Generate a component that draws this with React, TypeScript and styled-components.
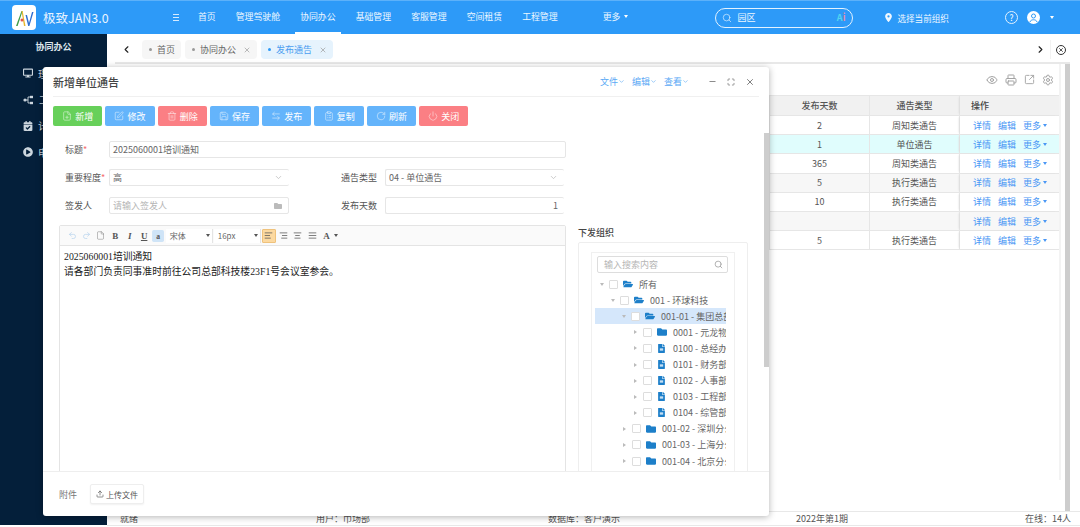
import React from "react";
import styled, { createGlobalStyle } from "styled-components";
import {
  AlignCenter,
  AlignJustify,
  AlignLeft,
  AlignRight,
  ArrowLeftRight,
  ChevronDown,
  ChevronLeft,
  ChevronRight,
  ClipboardList,
  Eye,
  File,
  FilePlus,
  Maximize,
  Minus,
  Power,
  Printer,
  Redo2,
  RotateCw,
  Save,
  Search,
  Settings,
  SquareArrowOutUpRight,
  SquarePen,
  Trash2,
  Undo2,
  Upload,
  X,
} from "lucide-react";
import { FaCalendarCheck, FaDesktop, FaFileAlt, FaFolder, FaFolderOpen, FaPlayCircle } from "react-icons/fa";
import { FaLocationDot } from "react-icons/fa6";

const GlobalStyle = createGlobalStyle`
  html, body {
    margin: 0;
    padding: 0;
    background: #fff;
  }
  * {
    box-sizing: border-box;
  }
  body {
    font-family: "Noto Sans CJK SC", "Noto Sans", sans-serif;
    font-size: 9px;
    color: #555;
  }
`;

const Page = styled.div`
  position: relative;
  width: 1080px;
  height: 527px;
  overflow: hidden;
  display: flex;
  flex-direction: column;
`;

const Header = styled.header`
  height: 34px;
  flex: none;
  display: flex;
  align-items: center;
  background: #2d9af8;
  border-top: 1px solid #5cb1fa;
  color: #fff;
`;

const Brand = styled.div`
  width: 170px;
  height: 100%;
  padding-left: 12px;
  display: flex;
  align-items: center;
  gap: 7px;
  font-size: 12.5px;
  color: #e8f4ff;
`;

const LogoTile = styled.div`
  width: 24px;
  height: 25px;
  border-radius: 4px;
  background: #fff;
  display: flex;
  align-items: center;
  justify-content: center;
`;

const NavToggle = styled.div`
  width: 9px;
  margin-right: 9px;
  display: flex;
  flex-direction: column;
  gap: 2px;
  align-items: flex-end;
  span {
    display: block;
    width: 6px;
    height: 1px;
    background: #d6ebff;
  }
`;

const NavItem = styled.div<{ $active?: boolean }>`
  height: 100%;
  margin: 0 5px;
  padding: 0 5px;
  display: flex;
  align-items: center;
  gap: 4px;
  font-size: 8.9px;
  white-space: nowrap;
  border-bottom: 2px solid ${(p) => (p.$active ? "#fff" : "transparent")};
  color: #eef7ff;
`;

const MoreNav = styled(NavItem)`
  margin-left: 30px;
`;

const Caret = styled.span<{ $color?: string }>`
  display: inline-block;
  width: 0;
  height: 0;
  border-left: 2.5px solid transparent;
  border-right: 2.5px solid transparent;
  border-top: 3px solid ${(p) => p.$color || "#fff"};
`;

const SearchBox = styled.div`
  width: 138px;
  height: 20px;
  margin-left: 77px;
  padding: 0 7px 0 6px;
  display: flex;
  align-items: center;
  gap: 5px;
  border: 1px solid #e3f2ff;
  border-radius: 10px;
  font-size: 9px;
  color: #eef7ff;
`;

const SearchText = styled.span`
  flex: 1;
`;

const AiMark = styled.span`
  font-size: 9px;
  font-weight: 700;
  color: #52d4f0;
  i {
    font-style: normal;
    color: #e58aa8;
  }
`;

const OrgPicker = styled.div`
  margin-left: 31px;
  display: flex;
  align-items: center;
  gap: 4px;
  font-size: 8.6px;
  color: #eef7ff;
`;

const HelpIcon = styled.div`
  width: 13px;
  height: 13px;
  margin-left: 56px;
  border: 1px solid #e3f2ff;
  border-radius: 50%;
  font-size: 8.5px;
  line-height: 11px;
  text-align: center;
`;

const Avatar = styled.div`
  width: 13px;
  height: 13px;
  margin-left: 9px;
  margin-right: 10px;
  display: flex;
`;

const Body = styled.div`
  flex: 1;
  min-height: 0;
  display: flex;
`;

const Sidebar = styled.aside`
  width: 107px;
  flex: none;
  height: 491px;
  background: #041f3a;
  color: #ccd6de;
`;

const SidebarTitle = styled.div`
  height: 25px;
  display: flex;
  align-items: center;
  justify-content: center;
  font-weight: 700;
  color: #dfe6ec;
`;

const SideMenu = styled.div`
  padding-top: 1px;
`;

const SideItem = styled.div`
  height: 26.4px;
  padding-left: 23px;
  display: flex;
  align-items: center;
  gap: 5px;
  white-space: nowrap;
  font-size: 10px;
`;

const Main = styled.main`
  flex: 1;
  min-width: 0;
  display: flex;
  flex-direction: column;
`;

const TabBar = styled.div`
  height: 28px;
  flex: none;
  padding: 6px 0 3px 14px;
  display: flex;
  align-items: stretch;
  gap: 4px;
`;

const TabArrow = styled.div`
  width: 16px;
  margin-right: 1px;
  display: flex;
  align-items: center;
  color: #222;
`;

const Tab = styled.div<{ $active?: boolean }>`
  padding: 0 6px 0 7px;
  display: flex;
  align-items: center;
  gap: 5px;
  border-radius: 4px;
  white-space: nowrap;
  background: ${(p) => (p.$active ? "#e6f3fd" : "#f6f6f6")};
  color: ${(p) => (p.$active ? "#4a9df0" : "#666")};
`;

const TabDot = styled.span<{ $active?: boolean }>`
  width: 3px;
  height: 3px;
  border-radius: 50%;
  background: ${(p) => (p.$active ? "#2d9af8" : "#999")};
`;

const TabClose = styled(X)`
  margin-left: 2px;
  color: #999;
`;

const TabTools = styled.div`
  margin-left: auto;
  display: flex;
  align-items: center;
  color: #222;
`;

const TabNext = styled.div`
  width: 15px;
  display: flex;
  align-items: center;
  justify-content: flex-start;
`;

const TabShut = styled.div`
  width: 30px;
  height: 100%;
  display: flex;
  align-items: center;
  padding-left: 5px;
  border-left: 1px solid #f2f2f2;
`;

const ShutIcon = styled.div`
  width: 10px;
  height: 10px;
  border: 1px solid #333;
  border-radius: 50%;
  display: flex;
  align-items: center;
  justify-content: center;
`;

const Workspace = styled.div`
  flex: 1;
  min-height: 0;
  margin-left: 8px;
  margin-right: 10px;
  display: flex;
  border-top: 2px solid #e8e8e8;
`;

const TablePanel = styled.section`
  flex: 1;
  min-width: 0;
  padding-right: 4px;
`;

const PanelInner = styled.div`
  height: 416px;
  border-right: 2px solid #f3f3f3;
`;

const TableTools = styled.div`
  height: 31px;
  padding-right: 5px;
  display: flex;
  align-items: center;
  justify-content: flex-end;
  gap: 7px;
  color: #a3a3a3;
`;

const TableRow = styled.div<{ $bg?: string }>`
  height: 19.2px;
  display: grid;
  grid-template-columns: 1fr 100px 90px 99px;
  border-bottom: 1px solid #e6e6e6;
  background: ${(p) => p.$bg || "#fff"};
`;

const HeadRow = styled(TableRow)`
  height: 21px;
  background: #f1f1f1;
  border-top: 1px solid #e6e6e6;
  font-weight: 500;
  color: #444;
`;

const Cell = styled.div`
  display: flex;
  align-items: center;
  justify-content: center;
  border-right: 1px solid #e6e6e6;
  color: #555;
`;

const OpCell = styled.div`
  padding-left: 13px;
  display: flex;
  align-items: center;
  gap: 7px;
  box-shadow: -2px 0 2px -1px #ddd;
`;

const OpHead = styled(OpCell)`
  padding-left: 11px;
  color: #444;
`;

const OpLink = styled.span`
  display: inline-flex;
  align-items: center;
  gap: 2px;
  color: #4a97f5;
`;

const ScrollTrack = styled.div`
  width: 5px;
  flex: none;
  background: #cdcdcd;
`;

const StatusBar = styled.footer`
  height: 15px;
  flex: none;
  margin-bottom: 1px;
  padding-left: 13px;
  display: grid;
  grid-template-columns: 196px 232px 248px 229px auto;
  align-items: center;
  border-top: 1px solid #e8e8e8;
  border-bottom: 1px solid #e8e8e8;
  color: #555;
  white-space: nowrap;
`;

const Modal = styled.div`
  position: absolute;
  left: 43px;
  top: 67px;
  width: 726px;
  height: 449px;
  display: flex;
  flex-direction: column;
  background: #fff;
  border-radius: 3px;
  box-shadow: 0 1px 7px rgba(0, 0, 0, 0.3);
`;

const ModalHeader = styled.div`
  height: 30px;
  flex: none;
  margin: 0 10px;
  display: flex;
  align-items: center;
  border-bottom: 1px solid #f0f0f0;
`;

const ModalTitle = styled.h2`
  margin: 0;
  font-size: 11px;
  font-weight: 500;
  color: #444;
`;

const MenuGroup = styled.div`
  margin-left: auto;
  display: flex;
  gap: 7px;
`;

const MenuLink = styled.span`
  display: inline-flex;
  align-items: center;
  color: #5aa9f5;
`;

const WindowTools = styled.div`
  width: 70px;
  padding-left: 19px;
  display: flex;
  align-items: center;
  gap: 10px;
  color: #666;
`;

const ModalBody = styled.div`
  flex: 1;
  min-height: 0;
  display: flex;
`;

const ModalContent = styled.div`
  flex: 1;
  min-width: 0;
  overflow: hidden;
`;

const ModalScroll = styled.div`
  width: 5px;
  flex: none;
  padding-top: 36px;
  &::before {
    content: "";
    display: block;
    height: 234px;
    background: #cdcdcd;
  }
`;

const ButtonRow = styled.div`
  margin: 9px 0 15px 10px;
  display: flex;
  gap: 3px;
`;

const ActionButton = styled.button<{ $bg: string }>`
  width: 49.3px;
  height: 20px;
  padding: 0;
  display: flex;
  align-items: center;
  justify-content: center;
  gap: 3px;
  border: 0;
  border-radius: 2px;
  background: ${(p) => p.$bg};
  color: #fff;
  font: inherit;
  font-size: 9px;
  svg {
    opacity: 0.75;
  }
`;

const FormRow = styled.div`
  height: 17px;
  margin: 0 0 11px 22px;
  display: flex;
  align-items: center;
`;

const FieldLabel = styled.label`
  width: 44px;
  flex: none;
  font-size: 9px;
  color: #555;
  white-space: nowrap;
  i {
    color: #f56c6c;
    font-style: normal;
  }
`;

const SecondLabel = styled(FieldLabel)`
  margin-left: 52px;
`;

const Field = styled.div<{ $width: number; $open?: boolean }>`
  width: ${(p) => p.$width}px;
  height: 100%;
  padding: 0 6px 0 3px;
  display: flex;
  align-items: center;
  justify-content: space-between;
  border: 1px solid #e6e6e6;
  ${(p) => (p.$open ? "border-right: 0;" : "")}
  border-radius: 2px;
  color: #666;
  svg {
    color: #bbb;
    flex: none;
  }
`;

const Placeholder = styled.span`
  color: #b5b5b5;
`;

const NumberValue = styled.span`
  margin-left: auto;
`;

const SplitRow = styled.div`
  margin-left: 16px;
  display: flex;
  gap: 12px;
`;

const Editor = styled.div`
  width: 507px;
  height: 300px;
  flex: none;
  border: 1px solid #e4e4e4;
  border-radius: 2px 2px 0 0;
`;

const EditorBar = styled.div`
  height: 20px;
  padding-left: 5px;
  display: flex;
  align-items: center;
  border-bottom: 1px solid #e4e4e4;
  background: #fafafa;
  color: #666;
`;

const EditorTool = styled.span<{ $active?: boolean; $faded?: boolean }>`
  width: 14.4px;
  height: 14px;
  flex: none;
  display: flex;
  align-items: center;
  justify-content: center;
  font-family: "Liberation Serif", serif;
  font-size: 9px;
  font-weight: 700;
  color: ${(p) => (p.$faded ? "#b8d4ee" : "#555")};
  ${(p) => (p.$active ? "background: #fcd9a0; border: 1px solid #efc27c; border-radius: 1px;" : "")}
`;

const BoxTool = styled(EditorTool)`
  background: #cfe4f7;
  border-radius: 2px;
  transform: scale(0.85);
`;

const EditorSelect = styled.div`
  width: 47px;
  height: 14px;
  flex: none;
  margin-right: 1px;
  padding: 0 2px 0 4px;
  display: flex;
  align-items: center;
  justify-content: space-between;
  background: #fff;
  border-right: 1px solid #e4e4e4;
  font-size: 8px;
  color: #666;
`;

const EditorText = styled.div`
  padding: 3px 4px;
  font-family: "Liberation Serif", "Noto Sans CJK SC", serif;
  font-size: 9.8px;
  line-height: 15px;
  color: #222;
`;

const OrgColumn = styled.div`
  width: 170px;
  flex: none;
`;

const OrgTitle = styled.div`
  height: 17px;
  padding-bottom: 3px;
  display: flex;
  align-items: center;
  font-weight: 500;
  color: #444;
`;

const OrgOuter = styled.div`
  height: 280px;
  padding: 9px 12px 0;
  border: 1px solid #eee;
  border-radius: 2px;
`;

const OrgInner = styled.div`
  height: 270px;
  padding: 3px 8px 0 3px;
  border: 1px solid #f0f0f0;
`;

const TreeSearch = styled.div`
  width: 131px;
  height: 17px;
  margin: 0 0 3px 2px;
  padding: 0 4px 0 6px;
  display: flex;
  align-items: center;
  justify-content: space-between;
  border: 1px solid #ddd;
  border-radius: 2px;
  color: #b5b5b5;
  svg {
    color: #999;
  }
`;

const Tree = styled.div`
  width: 131px;
  overflow: hidden;
`;

const TreeRow = styled.div<{ $level: number; $selected?: boolean }>`
  height: 16.1px;
  padding-left: ${(p) => 5 + p.$level * 11}px;
  display: flex;
  align-items: center;
  white-space: nowrap;
  color: #666;
  background: ${(p) => (p.$selected ? "#d5e7fb" : "transparent")};
`;

const TreeArrow = styled.span<{ $open?: boolean }>`
  width: 0;
  height: 0;
  flex: none;
  margin-right: 5px;
  ${(p) =>
    p.$open
      ? "border-left: 2.5px solid transparent; border-right: 2.5px solid transparent; border-top: 3px solid #bbb;"
      : "margin-left: 1px; margin-right: 6px; border-top: 2.5px solid transparent; border-bottom: 2.5px solid transparent; border-left: 3px solid #bbb;"}
`;

const TreeCheck = styled.span`
  width: 9px;
  height: 9px;
  flex: none;
  margin-right: 5px;
  background: #fff;
  border: 1px solid #ddd;
  border-radius: 1px;
`;

const TreeIcon = styled.span`
  width: 10px;
  flex: none;
  margin-right: 6px;
  display: flex;
  color: #1d7fc9;
`;

const ModalFooter = styled.div`
  height: 45px;
  flex: none;
  padding-left: 16px;
  display: flex;
  align-items: center;
  gap: 13px;
  border-top: 1px solid #eee;
  color: #777;
`;

const UploadButton = styled.button`
  width: 54px;
  height: 20px;
  padding: 0;
  display: flex;
  align-items: center;
  justify-content: center;
  gap: 2px;
  background: #fff;
  border: 1px solid #eee;
  border-radius: 2px;
  box-shadow: 0 1px 2px rgba(0, 0, 0, 0.06);
  font: inherit;
  font-size: 8px;
  color: #555;
`;

const navItems = ["首页", "管理驾驶舱", "协同办公", "基础管理", "客服管理", "空间租赁", "工程管理"];

const rows = [
  { days: "2", type: "周知类通告" },
  { days: "1", type: "单位通告", bg: "#e0fdfd" },
  { days: "365", type: "周知类通告" },
  { days: "5", type: "执行类通告", bg: "#f7f7f7" },
  { days: "10", type: "执行类通告" },
  { days: "", type: "", bg: "#f7f7f7" },
  { days: "5", type: "执行类通告" },
];

const buttons = [
  { label: "新增", bg: "#67d05a", icon: FilePlus },
  { label: "修改", bg: "#64b4fb", icon: SquarePen },
  { label: "删除", bg: "#fb7f84", icon: Trash2 },
  { label: "保存", bg: "#64b4fb", icon: Save },
  { label: "发布", bg: "#64b4fb", icon: ArrowLeftRight },
  { label: "复制", bg: "#64b4fb", icon: ClipboardList },
  { label: "刷新", bg: "#64b4fb", icon: RotateCw },
  { label: "关闭", bg: "#fb7f84", icon: Power },
];

const tree = [
  { level: 0, open: true, icon: "open", label: "所有" },
  { level: 1, open: true, icon: "open", label: "001 - 环球科技" },
  { level: 2, open: true, icon: "open", label: "001-01 - 集团总部", selected: true },
  { level: 3, icon: "folder", label: "0001 - 元龙物业" },
  { level: 3, icon: "file", label: "0100 - 总经办公室" },
  { level: 3, icon: "file", label: "0101 - 财务部门" },
  { level: 3, icon: "file", label: "0102 - 人事部门" },
  { level: 3, icon: "file", label: "0103 - 工程部门" },
  { level: 3, icon: "file", label: "0104 - 综管部门" },
  { level: 2, icon: "folder", label: "001-02 - 深圳分公司" },
  { level: 2, icon: "folder", label: "001-03 - 上海分公司" },
  { level: 2, icon: "folder", label: "001-04 - 北京分公司" },
];

const Logo = () => (
  <svg width="20" height="20" viewBox="0 0 20 20">
    <path d="M2 18 L7.5 3 L8.6 3 L3.6 18 Z" fill="#3f9c4a" />
    <path d="M7.5 3 L8.6 3 L11.5 18 L10 18 Z" fill="#e8b72c" />
    <circle cx="8" cy="12" r="1.5" fill="#e2574c" />
    <path d="M11.5 7 L13 7 L15 15 L18 4 L19.5 4 L15.4 18 L14.2 18 Z" fill="#2f6fd0" />
  </svg>
);

const BranchIcon = () => (
  <svg width="11" height="10" viewBox="0 0 11 10" fill="none" stroke="currentColor">
    <circle cx="2" cy="5" r="1.6" fill="currentColor" stroke="none" />
    <path d="M2 5 H5 M5 2 V8 M5 2 H7 M5 8 H7" strokeWidth="0.9" />
    <rect x="7" y="0.8" width="3" height="2.4" fill="currentColor" stroke="none" />
    <rect x="7" y="6.8" width="3" height="2.4" fill="currentColor" stroke="none" />
  </svg>
);

const AvatarIcon = () => (
  <svg width="13" height="13" viewBox="0 0 13 13">
    <circle cx="6.5" cy="6.5" r="6.5" fill="#fff" />
    <circle cx="6.5" cy="5" r="2" fill="none" stroke="#2d9af8" />
    <path d="M3 11 C3.5 8 9.5 8 10 11" fill="none" stroke="#2d9af8" />
  </svg>
);

const treeIcons: Record<string, React.ReactNode> = {
  open: <FaFolderOpen size={10} />,
  folder: <FaFolder size={10} />,
  file: <FaFileAlt size={9} />,
};

export default function App() {
  return (
    <Page>
      <GlobalStyle />
      <Header>
        <Brand>
          <LogoTile>
            <Logo />
          </LogoTile>
          极致JAN3.0
        </Brand>
        <NavToggle>
          <span />
          <span />
          <span />
        </NavToggle>
        {navItems.map((item) => (
          <NavItem key={item} $active={item === "协同办公"}>
            {item}
          </NavItem>
        ))}
        <MoreNav>
          更多 <Caret />
        </MoreNav>
        <SearchBox>
          <Search size={10} strokeWidth={1.5} />
          <SearchText>园区</SearchText>
          <AiMark>
            A<i>i</i>
          </AiMark>
        </SearchBox>
        <OrgPicker>
          <FaLocationDot size={9} />
          选择当前组织
        </OrgPicker>
        <HelpIcon>?</HelpIcon>
        <Avatar>
          <AvatarIcon />
        </Avatar>
        <Caret />
      </Header>
      <Body>
        <Sidebar>
          <SidebarTitle>协同办公</SidebarTitle>
          <SideMenu>
            <SideItem>
              <FaDesktop size={10} />
              理事管理
            </SideItem>
            <SideItem>
              <BranchIcon />
              工作流程
            </SideItem>
            <SideItem>
              <FaCalendarCheck size={10} />
              计划任务
            </SideItem>
            <SideItem>
              <FaPlayCircle size={10} />
              电子签章
            </SideItem>
          </SideMenu>
        </Sidebar>
        <Main>
          <TabBar>
            <TabArrow>
              <ChevronLeft size={11} strokeWidth={2.5} />
            </TabArrow>
            <Tab>
              <TabDot />
              首页
            </Tab>
            <Tab>
              <TabDot />
              协同办公
              <TabClose size={8} />
            </Tab>
            <Tab $active>
              <TabDot $active />
              发布通告
              <TabClose size={8} />
            </Tab>
            <TabTools>
              <TabNext>
                <ChevronRight size={11} strokeWidth={2.5} />
              </TabNext>
              <TabShut>
                <ShutIcon>
                  <X size={6} strokeWidth={3} />
                </ShutIcon>
              </TabShut>
            </TabTools>
          </TabBar>
          <Workspace>
            <TablePanel>
              <PanelInner>
                <TableTools>
                  <Eye size={12} />
                  <Printer size={12} />
                  <SquareArrowOutUpRight size={11} />
                  <Settings size={12} />
                </TableTools>
                <HeadRow>
                  <Cell />
                  <Cell>发布天数</Cell>
                  <Cell>通告类型</Cell>
                  <OpHead>操作</OpHead>
                </HeadRow>
                {rows.map((row, i) => (
                  <TableRow key={i} $bg={row.bg}>
                    <Cell />
                    <Cell>{row.days}</Cell>
                    <Cell>{row.type}</Cell>
                    <OpCell>
                      <OpLink>详情</OpLink>
                      <OpLink>编辑</OpLink>
                      <OpLink>
                        更多 <Caret $color="#4a97f5" />
                      </OpLink>
                    </OpCell>
                  </TableRow>
                ))}
              </PanelInner>
            </TablePanel>
            <ScrollTrack />
          </Workspace>
          <StatusBar>
            <span>就绪</span>
            <span>用户：巾场部</span>
            <span>数据库：客户演示</span>
            <span>2022年第1期</span>
            <span>在线：14人</span>
          </StatusBar>
        </Main>
      </Body>
      <Modal>
        <ModalHeader>
          <ModalTitle>新增单位通告</ModalTitle>
          <MenuGroup>
            <MenuLink>
              文件
              <ChevronDown size={7} />
            </MenuLink>
            <MenuLink>
              编辑
              <ChevronDown size={7} />
            </MenuLink>
            <MenuLink>
              查看
              <ChevronDown size={7} />
            </MenuLink>
          </MenuGroup>
          <WindowTools>
            <Minus size={9} />
            <Maximize size={8} />
            <X size={10} />
          </WindowTools>
        </ModalHeader>
        <ModalBody>
          <ModalContent>
            <ButtonRow>
              {buttons.map(({ label, bg, icon: Icon }) => (
                <ActionButton key={label} $bg={bg}>
                  <Icon size={10} strokeWidth={1.5} />
                  {label}
                </ActionButton>
              ))}
            </ButtonRow>
            <FormRow>
              <FieldLabel>
                标题<i>*</i>
              </FieldLabel>
              <Field $width={457}>2025060001培训通知</Field>
            </FormRow>
            <FormRow>
              <FieldLabel>
                重要程度<i>*</i>
              </FieldLabel>
              <Field $width={180} $open>
                高
                <ChevronDown size={9} />
              </Field>
              <SecondLabel>通告类型</SecondLabel>
              <Field $width={179} $open>
                04 - 单位通告
                <ChevronDown size={9} />
              </Field>
            </FormRow>
            <FormRow>
              <FieldLabel>签发人</FieldLabel>
              <Field $width={180}>
                <Placeholder>请输入签发人</Placeholder>
                <FaFolder size={8} />
              </Field>
              <SecondLabel>发布天数</SecondLabel>
              <Field $width={179} $open>
                <NumberValue>1</NumberValue>
              </Field>
            </FormRow>
            <SplitRow>
              <Editor>
                <EditorBar>
                  <EditorTool $faded>
                    <Undo2 size={9} />
                  </EditorTool>
                  <EditorTool $faded>
                    <Redo2 size={9} />
                  </EditorTool>
                  <EditorTool>
                    <File size={9} strokeWidth={1} />
                  </EditorTool>
                  <EditorTool>B</EditorTool>
                  <EditorTool>
                    <em>I</em>
                  </EditorTool>
                  <EditorTool>
                    <u>U</u>
                  </EditorTool>
                  <BoxTool>a</BoxTool>
                  <EditorSelect>
                    宋体
                    <Caret $color="#555" />
                  </EditorSelect>
                  <EditorSelect>
                    16px
                    <Caret $color="#555" />
                  </EditorSelect>
                  <EditorTool $active>
                    <AlignLeft size={9} />
                  </EditorTool>
                  <EditorTool>
                    <AlignRight size={9} />
                  </EditorTool>
                  <EditorTool>
                    <AlignCenter size={9} />
                  </EditorTool>
                  <EditorTool>
                    <AlignJustify size={9} />
                  </EditorTool>
                  <EditorTool>A</EditorTool>
                  <Caret $color="#555" />
                </EditorBar>
                <EditorText>
                  2025060001培训通知
                  <br />
                  请各部门负责同事准时前往公司总部科技楼23F1号会议室参会。
                </EditorText>
              </Editor>
              <OrgColumn>
                <OrgTitle>下发组织</OrgTitle>
                <OrgOuter>
                  <OrgInner>
                    <TreeSearch>
                      输入搜索内容
                      <Search size={9} />
                    </TreeSearch>
                    <Tree>
                      {tree.map((node) => (
                        <TreeRow key={node.label} $level={node.level} $selected={node.selected}>
                          <TreeArrow $open={node.open} />
                          <TreeCheck />
                          <TreeIcon>{treeIcons[node.icon]}</TreeIcon>
                          {node.label}
                        </TreeRow>
                      ))}
                    </Tree>
                  </OrgInner>
                </OrgOuter>
              </OrgColumn>
            </SplitRow>
          </ModalContent>
          <ModalScroll />
        </ModalBody>
        <ModalFooter>
          附件
          <UploadButton>
            <Upload size={8} />
            上传文件
          </UploadButton>
        </ModalFooter>
      </Modal>
    </Page>
  );
}
